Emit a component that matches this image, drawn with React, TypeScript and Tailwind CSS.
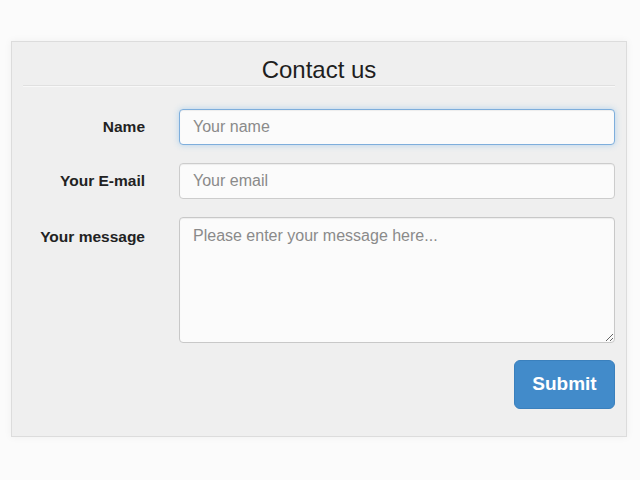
import React from "react";

export default function App() {
  const inputBase =
    "w-full min-w-0 flex-1 h-[36px] rounded-[4px] border bg-[#fbfbfb] px-[13px] text-[16px] text-[#555] placeholder:text-[#8a8a8a] outline-none";
  const labelCls = "w-[122px] shrink-0 whitespace-nowrap text-right text-[15.5px] font-bold text-[#222]";
  return (
    <div
      className="w-[640px] h-[480px] bg-[#fbfbfb] pt-[41px] pl-[11px]"
      style={{ fontFamily: '"Liberation Sans", Arial, sans-serif' }}
    >
      <div className="w-[616px] h-[396px] border border-[#dcdcdc] bg-[#efefef] px-[11px] shadow-[0_0_8px_rgba(0,0,0,0.05)]">
        <div className="mt-[14px] text-center text-[24px] leading-[28px] text-[#1e1e1e]">
          Contact us
        </div>
        <div className="mt-[1px] border-t border-[#e0e0e0] border-b border-b-[#f8f8f8]" />
        <div className="mt-[22px] flex flex-col gap-[18px]">
          <div className="flex items-center gap-[34px]">
            <label className={labelCls}>Name</label>
            <input
              className={inputBase + " border-[#7eaedc] shadow-[0_0_6px_rgba(102,175,233,0.45),inset_0_1px_1px_rgba(0,0,0,0.06)]"}
              placeholder="Your name"
            />
          </div>
          <div className="flex items-center gap-[34px]">
            <label className={labelCls}>Your E-mail</label>
            <input
              className={inputBase + " border-[#cccccc] shadow-[inset_0_1px_1px_rgba(0,0,0,0.06)]"}
              placeholder="Your email"
            />
          </div>
          <div className="flex items-start gap-[34px]">
            <label className={labelCls + " pt-[8px]"}>Your message</label>
            <textarea
              className="block min-w-0 flex-1 h-[126px] rounded-[4px] border border-[#c8c8c8] bg-[#fbfbfb] px-[13px] py-[8px] text-[16px] leading-[20px] text-[#555] placeholder:text-[#8a8a8a] outline-none shadow-[inset_0_1px_1px_rgba(0,0,0,0.06)]"
              placeholder="Please enter your message here..."
            />
          </div>
          <div className="flex justify-end -mt-[1px]">
            <button className="w-[101px] h-[49px] rounded-[6px] bg-[#428bca] border border-[#3a80bd] text-white text-[19px] font-bold">
              Submit
            </button>
          </div>
        </div>
      </div>
    </div>
  );
}
